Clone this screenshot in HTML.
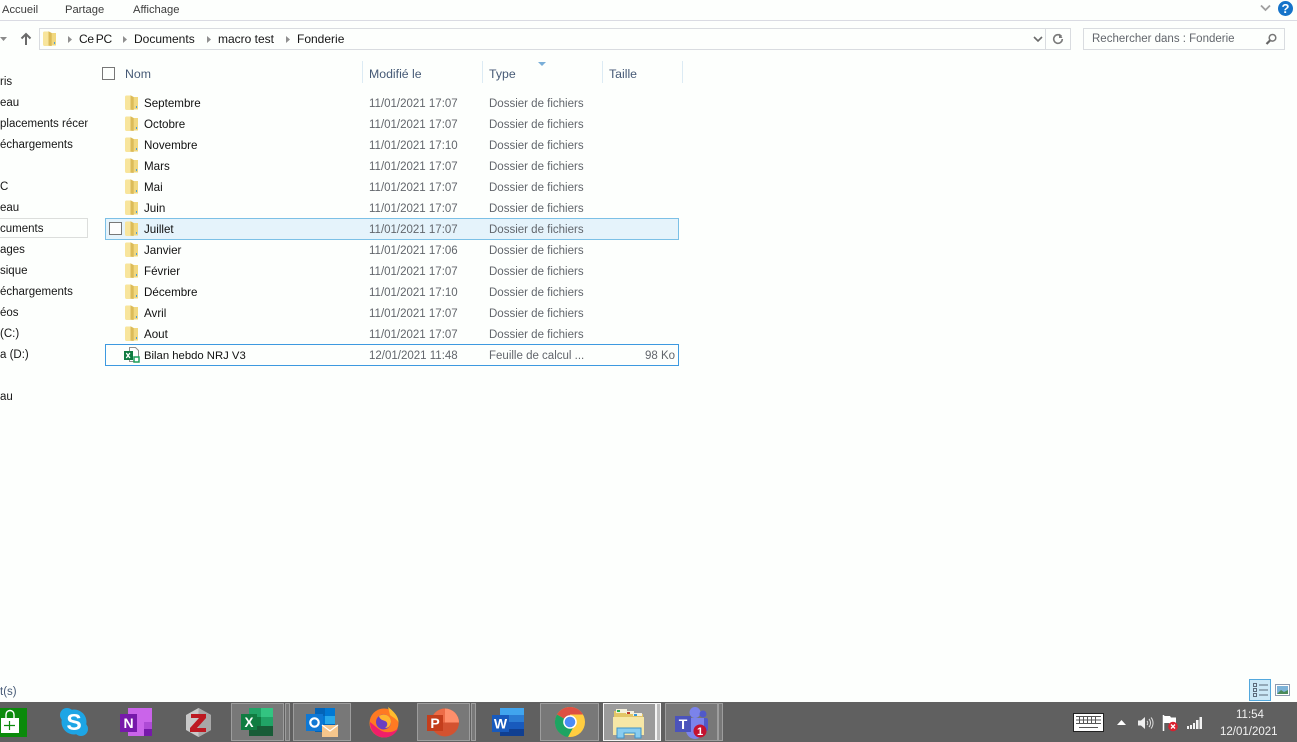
<!DOCTYPE html>
<html lang="fr">
<head>
<meta charset="utf-8">
<title>Fonderie</title>
<style>
html,body{margin:0;padding:0;width:1297px;height:742px;overflow:hidden;background:#fdfffd;font-family:"Liberation Sans",sans-serif;font-size:11.5px;color:#161616}
.a{position:absolute}
.t{position:absolute;white-space:nowrap;line-height:18px;height:18px}
.n{font-size:11.6px;color:#111}
.b{font-size:12px;line-height:16px;height:16px}
.g{color:#62666c}
.h{color:#465a76;font-size:12.3px;line-height:16px;height:16px}
.tab{color:#3c3c3c;font-size:11.2px}
.sep{position:absolute;top:61px;width:1px;height:22px;background:#dcebf4}
.btn{position:absolute;top:703px;height:38px;box-sizing:border-box;border:1px solid #9d9d9d;background:#787878}
.ext{position:absolute;top:703px;height:38px;width:5px;box-sizing:border-box;border:1px solid #9d9d9d;background:#787878}
svg{position:absolute;overflow:visible}
svg text{font-family:"Liberation Sans",sans-serif;font-weight:bold}
</style>
</head>
<body>
<svg width="0" height="0" style="position:absolute"><defs>
<symbol id="f" viewBox="0 0 14 15"><path d="M8.500 2H13v12.500H8.500z" fill="#f1d87f"/><path d="M0 2Q0 .5 1.500 .5H5.500V15H1.500Q0 15 0 13z" fill="#f8e59c"/><path d="M5.500 .2l3.200 1.800v13l-3.200-.2z" fill="#dcbb58"/><path d="M11 11h1v2h-1z" fill="#4f9fd6"/></symbol>
</defs></svg>

<!-- ribbon -->
<div class="t tab" style="left:2px;top:1px">Accueil</div>
<div class="t tab" style="left:65px;top:1px">Partage</div>
<div class="t tab" style="left:133px;top:1px">Affichage</div>
<svg style="left:1260px;top:4px" width="12" height="8"><path d="M1 1.500l4.500 4.500 4.500-4.500" fill="none" stroke="#a0a0a0" stroke-width="1.800"/></svg>
<div class="a" style="left:1278px;top:1px;width:15px;height:15px;border-radius:50%;background:#1573c9;color:#fff;font-weight:bold;font-size:13px;line-height:15px;text-align:center">?</div>
<div class="a" style="left:0;top:20px;width:1297px;height:1px;background:#dadbe3"></div>

<!-- nav -->
<svg style="left:0;top:36px" width="8" height="6"><path d="M0 1h7L3.500 5z" fill="#8a8a8a"/></svg>
<svg style="left:20px;top:32px" width="12" height="14"><path d="M6 13V2M1.500 6.500L6 2l4.500 4.500" fill="none" stroke="#6a6a6a" stroke-width="2"/></svg>

<!-- address bar -->
<div class="a" style="left:39px;top:28px;width:1032px;height:22px;box-sizing:border-box;border:1px solid #d9dce0"></div>
<div class="a" style="left:1045px;top:28px;width:1px;height:22px;background:#d9dce0"></div>
<svg style="left:43px;top:31px" width="14" height="15"><use href="#f" width="14" height="15"/></svg>
<svg style="left:67px;top:36px" width="6" height="8"><path d="M1 0l4 3.500L1 7z" fill="#8f8f8f"/></svg>
<div class="t b" style="left:79px;top:31px;letter-spacing:-.3px;word-spacing:-1px">Ce PC</div>
<svg style="left:122px;top:36px" width="6" height="8"><path d="M1 0l4 3.500L1 7z" fill="#8f8f8f"/></svg>
<div class="t b" style="left:134px;top:31px">Documents</div>
<svg style="left:206px;top:36px" width="6" height="8"><path d="M1 0l4 3.500L1 7z" fill="#8f8f8f"/></svg>
<div class="t b" style="left:218px;top:31px">macro test</div>
<svg style="left:285px;top:36px" width="6" height="8"><path d="M1 0l4 3.500L1 7z" fill="#8f8f8f"/></svg>
<div class="t b" style="left:297px;top:31px">Fonderie</div>
<svg style="left:1033px;top:36px" width="10" height="7"><path d="M1 1l4 4 4-4" fill="none" stroke="#6a6a6a" stroke-width="1.600"/></svg>
<svg style="left:1052px;top:33px" width="12" height="12"><path d="M9.500 3.500A4.300 4.300 0 1 0 10.300 6" fill="none" stroke="#7a7a7a" stroke-width="1.600"/><path d="M7 0.500v4.500h3.500z" fill="#7a7a7a"/></svg>

<!-- search -->
<div class="a" style="left:1083px;top:28px;width:202px;height:22px;box-sizing:border-box;border:1px solid #d9dce0"></div>
<div class="t g" style="left:1092px;top:30px">Rechercher dans : Fonderie</div>
<svg style="left:1265px;top:33px" width="13" height="13"><circle cx="7.500" cy="4.800" r="3.300" fill="none" stroke="#777" stroke-width="1.500"/><path d="M5 7.500L1.500 11" stroke="#666" stroke-width="2.200"/></svg>

<!-- sidebar -->
<div class="a" style="left:0;top:70px;width:88px;height:340px;overflow:hidden">
<div class="t" style="left:0;top:3px">ris</div>
<div class="t" style="left:0;top:24px">eau</div>
<div class="t" style="left:0;top:45px">placements récents</div>
<div class="t" style="left:0;top:66px">échargements</div>
<div class="t" style="left:0;top:108px">C</div>
<div class="t" style="left:0;top:129px">eau</div>
<div class="a" style="left:-2px;top:148px;width:90px;height:20px;box-sizing:border-box;border:1px solid #dcdedc"></div>
<div class="t" style="left:0;top:150px">cuments</div>
<div class="t" style="left:0;top:171px">ages</div>
<div class="t" style="left:0;top:192px">sique</div>
<div class="t" style="left:0;top:213px">échargements</div>
<div class="t" style="left:0;top:234px">éos</div>
<div class="t" style="left:0;top:255px">(C:)</div>
<div class="t" style="left:0;top:276px">a (D:)</div>
<div class="t" style="left:0;top:318px">au</div>
</div>

<!-- header -->
<div class="a" style="left:102px;top:67px;width:13px;height:13px;box-sizing:border-box;border:1px solid #777"></div>
<div class="t h" style="left:125px;top:66px">Nom</div>
<div class="sep" style="left:362px"></div>
<div class="t h" style="left:369px;top:66px">Modifié le</div>
<div class="sep" style="left:482px"></div>
<div class="t h" style="left:489px;top:66px">Type</div>
<svg style="left:538px;top:62px" width="8" height="4"><path d="M0 0h8L4 4z" fill="#79aed8"/></svg>
<div class="sep" style="left:602px"></div>
<div class="t h" style="left:609px;top:66px">Taille</div>
<div class="sep" style="left:682px"></div>

<!-- selected rows -->
<div class="a" style="left:105px;top:218px;width:574px;height:22px;box-sizing:border-box;border:1px solid #7cc0e6;background:#e5f3fb"></div>
<div class="a" style="left:109px;top:222px;width:13px;height:13px;box-sizing:border-box;border:1px solid #777;background:#fdfdfd"></div>
<div class="a" style="left:105px;top:344px;width:574px;height:22px;box-sizing:border-box;border:1px solid #3d99e0"></div>

<!-- rows -->
<svg style="left:125px;top:95px" width="14" height="15"><use href="#f" width="14" height="15"/></svg><div class="t n" style="left:144px;top:95px">Septembre</div><div class="t g" style="left:369px;top:95px">11/01/2021 17:07</div><div class="t g" style="left:489px;top:95px">Dossier de fichiers</div>
<svg style="left:125px;top:116px" width="14" height="15"><use href="#f" width="14" height="15"/></svg><div class="t n" style="left:144px;top:116px">Octobre</div><div class="t g" style="left:369px;top:116px">11/01/2021 17:07</div><div class="t g" style="left:489px;top:116px">Dossier de fichiers</div>
<svg style="left:125px;top:137px" width="14" height="15"><use href="#f" width="14" height="15"/></svg><div class="t n" style="left:144px;top:137px">Novembre</div><div class="t g" style="left:369px;top:137px">11/01/2021 17:10</div><div class="t g" style="left:489px;top:137px">Dossier de fichiers</div>
<svg style="left:125px;top:158px" width="14" height="15"><use href="#f" width="14" height="15"/></svg><div class="t n" style="left:144px;top:158px">Mars</div><div class="t g" style="left:369px;top:158px">11/01/2021 17:07</div><div class="t g" style="left:489px;top:158px">Dossier de fichiers</div>
<svg style="left:125px;top:179px" width="14" height="15"><use href="#f" width="14" height="15"/></svg><div class="t n" style="left:144px;top:179px">Mai</div><div class="t g" style="left:369px;top:179px">11/01/2021 17:07</div><div class="t g" style="left:489px;top:179px">Dossier de fichiers</div>
<svg style="left:125px;top:200px" width="14" height="15"><use href="#f" width="14" height="15"/></svg><div class="t n" style="left:144px;top:200px">Juin</div><div class="t g" style="left:369px;top:200px">11/01/2021 17:07</div><div class="t g" style="left:489px;top:200px">Dossier de fichiers</div>
<svg style="left:125px;top:221px" width="14" height="15"><use href="#f" width="14" height="15"/></svg><div class="t n" style="left:144px;top:221px">Juillet</div><div class="t g" style="left:369px;top:221px">11/01/2021 17:07</div><div class="t g" style="left:489px;top:221px">Dossier de fichiers</div>
<svg style="left:125px;top:242px" width="14" height="15"><use href="#f" width="14" height="15"/></svg><div class="t n" style="left:144px;top:242px">Janvier</div><div class="t g" style="left:369px;top:242px">11/01/2021 17:06</div><div class="t g" style="left:489px;top:242px">Dossier de fichiers</div>
<svg style="left:125px;top:263px" width="14" height="15"><use href="#f" width="14" height="15"/></svg><div class="t n" style="left:144px;top:263px">Février</div><div class="t g" style="left:369px;top:263px">11/01/2021 17:07</div><div class="t g" style="left:489px;top:263px">Dossier de fichiers</div>
<svg style="left:125px;top:284px" width="14" height="15"><use href="#f" width="14" height="15"/></svg><div class="t n" style="left:144px;top:284px">Décembre</div><div class="t g" style="left:369px;top:284px">11/01/2021 17:10</div><div class="t g" style="left:489px;top:284px">Dossier de fichiers</div>
<svg style="left:125px;top:305px" width="14" height="15"><use href="#f" width="14" height="15"/></svg><div class="t n" style="left:144px;top:305px">Avril</div><div class="t g" style="left:369px;top:305px">11/01/2021 17:07</div><div class="t g" style="left:489px;top:305px">Dossier de fichiers</div>
<svg style="left:125px;top:326px" width="14" height="15"><use href="#f" width="14" height="15"/></svg><div class="t n" style="left:144px;top:326px">Aout</div><div class="t g" style="left:369px;top:326px">11/01/2021 17:07</div><div class="t g" style="left:489px;top:326px">Dossier de fichiers</div>

<svg style="left:124px;top:347px" width="16" height="16"><path d="M5.500 .5h6l3 3v11h-9z" fill="#fff" stroke="#8f8f8f"/><rect x="0" y="4" width="9" height="9" fill="#107c41"/><path d="M2.300 6l3.600 5M5.900 6l-3.600 5" stroke="#fff" stroke-width="1.300"/><rect x="10" y="10" width="5" height="5" fill="#fff" stroke="#1f9e5a" stroke-width="1.500"/></svg>
<div class="t" style="left:144px;top:347px;color:#111;font-size:11.3px">Bilan hebdo NRJ V3</div>
<div class="t g" style="left:369px;top:347px">12/01/2021 11:48</div>
<div class="t g" style="left:489px;top:347px">Feuille de calcul ...</div>
<div class="t g" style="left:645px;top:347px">98 Ko</div>

<!-- status bar -->
<div class="t" style="left:0;top:683px;color:#465a76">t(s)</div>
<div class="a" style="left:1249px;top:679px;width:22px;height:22px;box-sizing:border-box;border:1px solid #53a8dd;background:#cce8f7"></div>
<svg style="left:1252px;top:682px" width="16" height="16"><g fill="none" stroke="#5d6a7a"><rect x="1.500" y="1.500" width="3" height="3"/><rect x="1.500" y="6.500" width="3" height="3"/><rect x="1.500" y="11.500" width="3" height="3"/><path d="M7 3h9M7 8h9M7 13h9"/></g></svg>
<svg style="left:1275px;top:684px" width="15" height="13"><rect x=".5" y=".5" width="14" height="11" fill="#fff" stroke="#8d9bb0"/><rect x="2" y="2" width="11" height="8" fill="#7cb3d8"/><path d="M2 10l4-4 3 2 4-2v4z" fill="#4a8a5a"/></svg>

<!-- taskbar -->
<div class="a" style="left:0;top:702px;width:1297px;height:40px;background:#606060"></div>

<!-- store -->
<svg style="left:0;top:708px" width="27" height="29"><rect width="27" height="29" fill="#0b8a0b"/><path d="M1 10h18v15H1z" fill="#fff"/><path d="M6 10V6.500a4 4 0 0 1 8 0V10" fill="none" stroke="#fff" stroke-width="1.400"/><path d="M9.500 13v9M4 17.500h11" stroke="#0b8a0b" stroke-width="1.200"/></svg>

<!-- skype -->
<svg style="left:59px;top:707px" width="30" height="30"><circle cx="15" cy="15" r="12.500" fill="#1da5e5"/><circle cx="8" cy="8" r="7" fill="#1da5e5"/><circle cx="22" cy="22" r="7" fill="#1da5e5"/><text x="15" y="23" font-size="23" fill="#fff" text-anchor="middle">S</text></svg>

<!-- onenote -->
<svg style="left:120px;top:708px" width="33" height="29"><rect x="8" y="0" width="24" height="28" fill="#ca64ea"/><rect x="24" y="14" width="8" height="7" fill="#ae4bd5"/><rect x="24" y="21" width="8" height="7" fill="#7719aa"/><rect x="0" y="6" width="17" height="18" fill="#7719aa"/><text x="8.500" y="20" font-size="14" fill="#fff" text-anchor="middle">N</text></svg>

<!-- zotero-like -->
<svg style="left:185px;top:708px" width="27" height="29"><path d="M13.500 0L26 7v15l-12.500 7L1 22V7z" fill="#c9c9c9"/><path d="M13.500 0L26 7v15l-12.500 7z" fill="#a8a8a8"/><path d="M6 6h15v4L12 20h9v4H5v-4l9-10H6z" fill="#bd1a22"/></svg>

<!-- excel -->
<div class="btn" style="left:231px;width:53px"></div><div class="ext" style="left:285px"></div>
<svg style="left:241px;top:708px" width="33" height="28"><rect x="8" width="24" height="28" fill="#21a366"/><rect x="20" width="12" height="9" fill="#33c481"/><rect x="8" y="9" width="12" height="9" fill="#107c41"/><rect x="8" y="18" width="24" height="10" fill="#185c37"/><rect y="6" width="16" height="16" fill="#107c41"/><text x="8" y="19" font-size="13.500" fill="#fff" text-anchor="middle">X</text></svg>

<!-- outlook -->
<div class="btn" style="left:293px;width:58px"></div>
<svg style="left:305px;top:708px" width="34" height="30"><rect x="10" width="20" height="24" fill="#0364b8"/><rect x="20" width="10" height="8" fill="#0078d4"/><rect x="10" y="8" width="10" height="8" fill="#0078d4"/><rect x="20" y="8" width="10" height="8" fill="#28a8ea"/><rect x="1" y="6" width="17" height="17" fill="#0f78d4"/><circle cx="9.500" cy="14.500" r="4.200" fill="none" stroke="#fff" stroke-width="2.200"/><rect x="17" y="17" width="16" height="12" fill="#f5c68c"/><path d="M17 17l8 6 8-6" fill="none" stroke="#fff" stroke-width="1.200"/></svg>

<!-- firefox -->
<svg style="left:368px;top:706px" width="32" height="32"><circle cx="16" cy="17" r="14.500" fill="#ff7a22"/><path d="M20 1c4 3 11 9 10.500 16C30 14 26 12 22 9z" fill="#ffbd2e"/><path d="M2 16C2 26 9 31.500 16 31.500c7 0 12-4 14-9-4 4-12 5-17 2C9 22 6 19 2 16z" fill="#f01f6a"/><circle cx="15.500" cy="16" r="7.500" fill="#6a3fc0"/><path d="M11 10c5-3 11-1 12 5 0 4-2 7-6 7 3-2 3-6 0-7-2-1-5-1-6-5z" fill="#ffb52e"/></svg>

<!-- powerpoint -->
<div class="btn" style="left:417px;width:53px"></div><div class="ext" style="left:471px"></div>
<svg style="left:427px;top:708px" width="33" height="29"><circle cx="18" cy="14.500" r="14" fill="#d35230"/><path d="M18 .500a14 14 0 0 1 14 14H18z" fill="#ff8f6b"/><path d="M4 14.500A14 14 0 0 1 18 .500v14z" fill="#ed6c47"/><rect y="7" width="16" height="16" fill="#c43e1c"/><text x="8" y="20" font-size="14" fill="#fff" text-anchor="middle">P</text></svg>

<!-- word -->
<svg style="left:492px;top:708px" width="33" height="28"><rect x="8" width="24" height="28" fill="#2b7cd3"/><rect x="8" width="24" height="7" fill="#41a5ee"/><rect x="8" y="14" width="24" height="7" fill="#185abd"/><rect x="8" y="21" width="24" height="7" fill="#103f91"/><rect y="7" width="17" height="17" fill="#185abd"/><text x="8.500" y="20.500" font-size="14" fill="#fff" text-anchor="middle">W</text></svg>

<!-- chrome -->
<div class="btn" style="left:540px;width:59px"></div>
<svg style="left:555px;top:707px" width="30" height="30"><circle cx="15" cy="15" r="15" fill="#ffcd40"/><path d="M15 15L2 7.500A15 15 0 0 1 28 7.500H15z" fill="#dd5044"/><path d="M15 15L2 7.500A15 15 0 0 0 13 30l6-11z" fill="#1da462"/><circle cx="15" cy="15" r="6.800" fill="#fff"/><circle cx="15" cy="15" r="5.300" fill="#4c8bf5"/></svg>

<!-- explorer -->
<div class="a" style="left:603px;top:703px;width:53px;height:38px;box-sizing:border-box;border:1px solid #f4f4f4;background:#9b9b9b"></div>
<div class="a" style="left:656px;top:703px;width:5px;height:38px;box-sizing:border-box;border:1px solid #f4f4f4;background:#bdbdbd"></div>
<svg style="left:613px;top:708px" width="32" height="30"><path d="M1 3h14l2 3h13v21H1z" fill="#e3c667"/><rect x="3" y="1" width="11" height="4" fill="#f5f0dc"/><rect x="4" y="2" width="3" height="2" fill="#23b14d"/><rect x="13" y="3" width="8" height="3" fill="#f5f0dc"/><rect x="14" y="4" width="3" height="2" fill="#c0392b"/><rect x="20" y="5" width="9" height="3" fill="#f5f0dc"/><rect x="21" y="6" width="3" height="2" fill="#3498db"/><path d="M0 9h31v18H0z" fill="#f6e7a6"/><path d="M4 20h24v10h-6v-5H11v5H4z" fill="#88cdf0" stroke="#3f93c8"/></svg>

<!-- teams -->
<div class="btn" style="left:665px;width:53px"></div><div class="ext" style="left:718px"></div>
<svg style="left:674px;top:706px" width="36" height="34"><circle cx="21" cy="6.500" r="5.500" fill="#7b83eb"/><circle cx="29" cy="8" r="3.500" fill="#5059c9"/><rect x="25" y="12" width="9" height="13" rx="2" fill="#5059c9"/><path d="M12 12h18v12a9 9 0 0 1-18 0z" fill="#7b83eb"/><rect x="1" y="10" width="16" height="16" fill="#4b53bc"/><text x="9" y="23" font-size="14" fill="#fff" text-anchor="middle">T</text><circle cx="26" cy="25" r="6.500" fill="#c4122f"/><text x="26" y="29" font-size="11" fill="#fff" text-anchor="middle">1</text></svg>

<!-- tray -->
<svg style="left:1073px;top:713px" width="31" height="19"><rect x=".5" y=".5" width="30" height="18" fill="#fff" stroke="#222"/><g fill="none" stroke="#555"><path d="M3 3.500h25M3 7h25M3 10.500h25M6 14.500h19"/><path d="M6.500 3v8M10.500 3v8M14.500 3v8M18.500 3v8M22.500 3v8"/></g></svg>
<svg style="left:1117px;top:720px" width="9" height="5"><path d="M0 5L4.500 0 9 5z" fill="#fff"/></svg>
<svg style="left:1138px;top:716px" width="16" height="14"><path d="M0 4.500h3L7 1v12L3 9.500H0z" fill="#eee"/><path d="M9 5a3 3 0 0 1 0 4M11 3a6 6 0 0 1 0 8M13 1.500a8.500 8.500 0 0 1 0 11" fill="none" stroke="#ddd"/></svg>
<svg style="left:1162px;top:715px" width="17" height="17"><path d="M1.500 0v16" stroke="#fff" stroke-width="1.500"/><path d="M2 1h6l1 1.500h5v7H8L7 8H2z" fill="#fff"/><circle cx="11" cy="11.500" r="4.800" fill="#d9202f"/><path d="M9 9.500l4 4M13 9.500l-4 4" stroke="#fff" stroke-width="1.300"/></svg>
<svg style="left:1187px;top:717px" width="16" height="12"><path d="M0 9h2v3H0zM3 8h2v4H3zM6 6h2v6H6zM9 3h2.500v9H9zM12.500 0H15v12h-2.500z" fill="#f2f2f2"/></svg>
<div class="t" style="left:1236px;top:706px;color:#f2f2f2">11:54</div>
<div class="t" style="left:1220px;top:723px;color:#f2f2f2">12/01/2021</div>
</body>
</html>
